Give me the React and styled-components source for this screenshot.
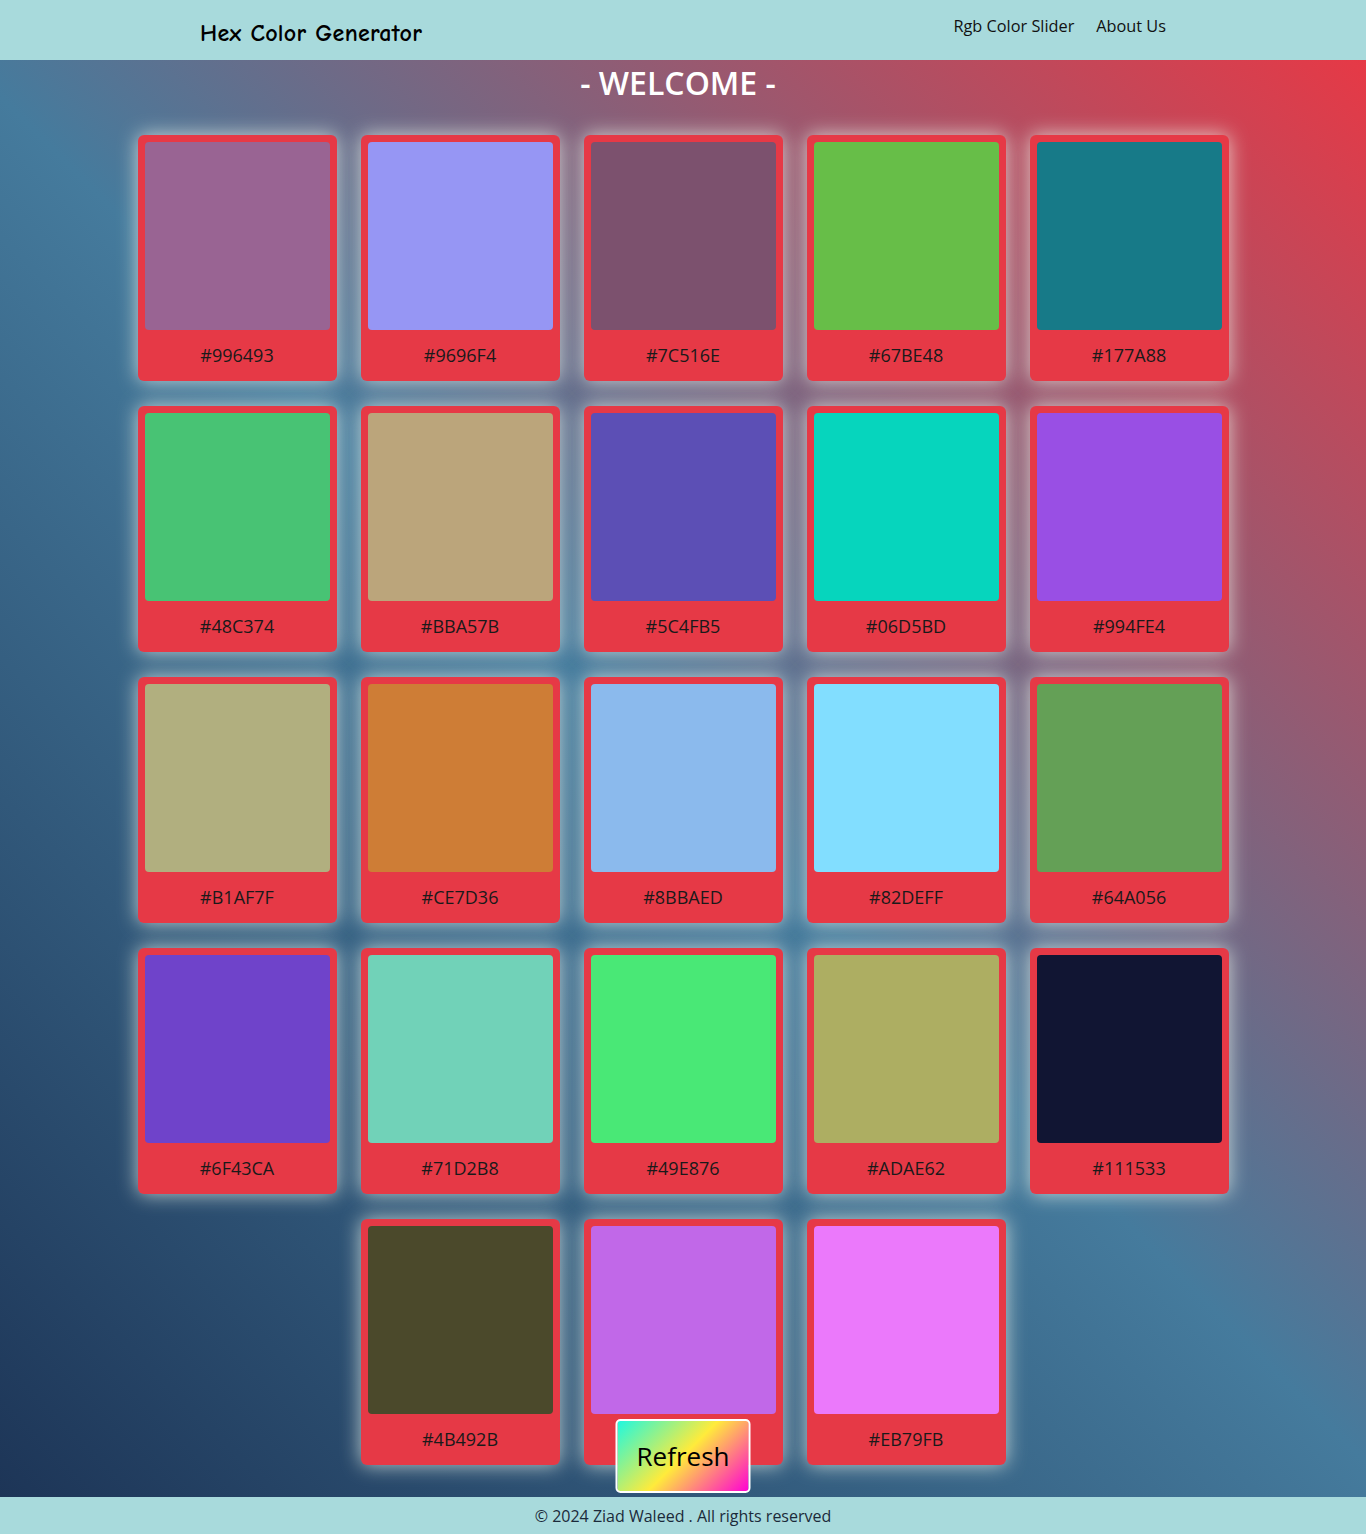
import styled, { createGlobalStyle } from 'styled-components'

const GlobalStyle = createGlobalStyle`
  * { box-sizing: border-box; }
  body {
    margin: 0;
    font-family: "Open Sans", "Noto Sans", sans-serif;
  }
`

const colorsList = [
  '#996493', '#9696F4', '#7C516E', '#67BE48', '#177A88',
  '#48C374', '#BBA57B', '#5C4FB5', '#06D5BD', '#994FE4',
  '#B1AF7F', '#CE7D36', '#8BBAED', '#82DEFF', '#64A056',
  '#6F43CA', '#71D2B8', '#49E876', '#ADAE62', '#111533',
  '#4B492B', '#C168E8', '#EB79FB',
]

const Page = styled.div`
  display: flex;
  flex-direction: column;
  min-height: 100vh;
`

const Header = styled.header`
  height: 60px;
  background: #a8dadc;
  display: flex;
  justify-content: space-between;
  align-items: center;
  padding: 0 200px;
`

const Logo = styled.h1`
  margin: 6px 0 0;
  font-family: "Comic Sans MS", "Comic Neue", cursive;
  font-size: 24px;
  letter-spacing: 0.3px;
  font-weight: 700;
  color: #000;
`

const Nav = styled.nav`
  display: flex;
  gap: 22px;
  margin-bottom: 8px;
`

const NavLink = styled.a`
  font-size: 16.3px;
  color: #111;
  text-decoration: none;
  cursor: pointer;
`

const Main = styled.main`
  flex: 1;
  position: relative;
  background: linear-gradient(45deg, #1d3557, #457b9d, #e63946);
  padding-bottom: 32px;
`

const Welcome = styled.h2`
  margin: 0;
  padding-right: 10px;
  text-align: center;
  font-size: 32px;
  line-height: 46px;
  font-weight: 600;
  color: #fff;
`

const Grid = styled.div`
  width: 1091px;
  margin: 29px auto 0;
  display: flex;
  flex-wrap: wrap;
  justify-content: center;
  gap: 25px 24px;
`

const Card = styled.div`
  width: 199px;
  height: 246px;
  padding: 7px 7px 0;
  background: #e63946;
  border-radius: 6px;
  box-shadow: 0 0 20px rgba(241, 250, 238, 0.75);
  display: flex;
  flex-direction: column;
`

const Swatch = styled.div`
  height: 188px;
  border-radius: 4px;
  background: ${({ $color }) => $color};
`

const HexLabel = styled.span`
  flex: 1;
  display: flex;
  align-items: center;
  justify-content: center;
  font-size: 18px;
  color: #1a1a1a;
  padding-bottom: 2px;
`

const RefreshButton = styled.button`
  position: absolute;
  left: 50%;
  bottom: 4px;
  transform: translateX(-50%);
  width: 135px;
  height: 74px;
  border: 2px solid #fff;
  border-radius: 5px;
  background: linear-gradient(135deg, #1ff8e0 0%, #ffeb3b 50%, #ff00d4 100%);
  font-family: "Open Sans", "Noto Sans", sans-serif;
  font-size: 26px;
  font-weight: 500;
  color: #000;
  cursor: pointer;
`

const Footer = styled.footer`
  height: 37px;
  background: #a8dadc;
  display: flex;
  align-items: center;
  justify-content: center;
  font-size: 16px;
  color: #1b2a3a;
`

function App() {
  return (
    <Page>
      <GlobalStyle />
      <Header>
        <Logo>Hex Color Generator</Logo>
        <Nav>
          <NavLink>Rgb Color Slider</NavLink>
          <NavLink>About Us</NavLink>
        </Nav>
      </Header>
      <Main>
        <Welcome>- WELCOME -</Welcome>
        <Grid>
          {colorsList.map((color) => (
            <Card key={color}>
              <Swatch $color={color} />
              <HexLabel>{color}</HexLabel>
            </Card>
          ))}
        </Grid>
        <RefreshButton>Refresh</RefreshButton>
      </Main>
      <Footer>© 2024 Ziad Waleed . All rights reserved</Footer>
    </Page>
  )
}

export default App
